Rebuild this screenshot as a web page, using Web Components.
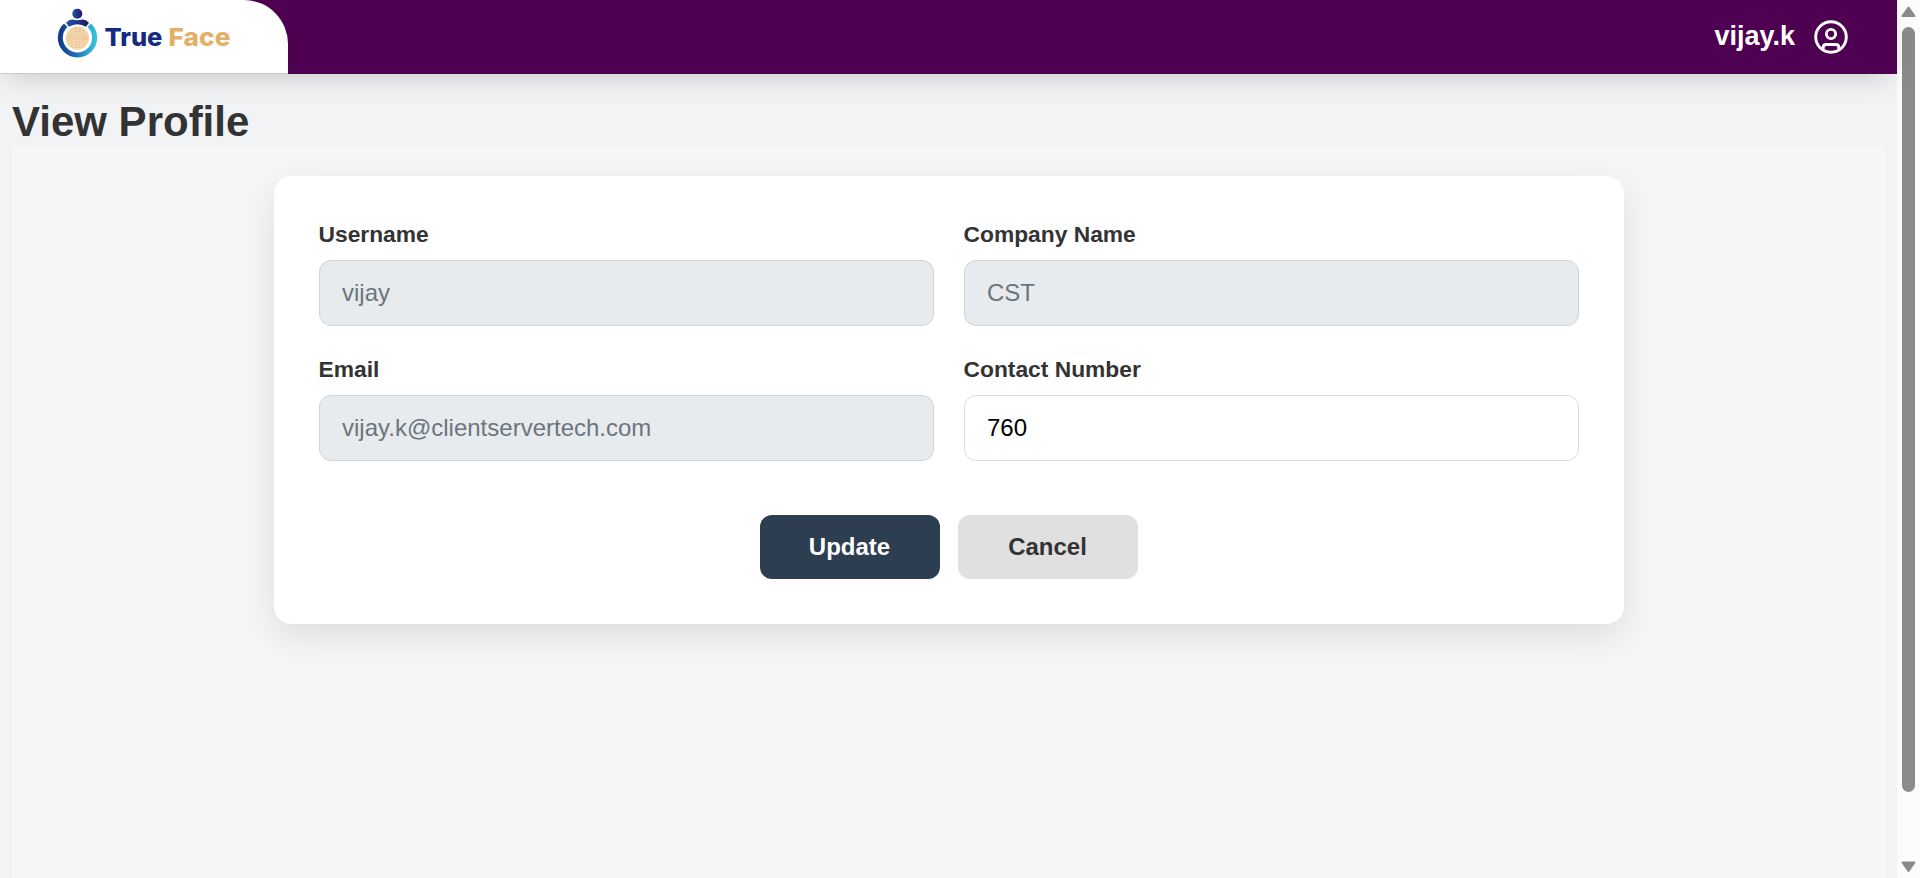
<!DOCTYPE html>
<html lang="en">
<head>
<meta charset="utf-8">
<title>View Profile</title>
<style>
html,body{margin:0;height:100%;overflow:hidden}
body{font-family:"Liberation Sans",Arial,sans-serif;color:#333;background:#f1f3f5}
</style>
</head>
<body>
<profile-app>
  <app-header user="vijay.k"></app-header>
  <profile-page heading="View Profile">
    <form-field label="Username" value="vijay" disabled></form-field>
    <form-field label="Company Name" value="CST" disabled></form-field>
    <form-field label="Email" value="vijay.k@clientservertech.com" disabled></form-field>
    <form-field label="Contact Number" value="760"></form-field>
    <action-button slot="actions" primary>Update</action-button>
    <action-button slot="actions">Cancel</action-button>
  </profile-page>
  <scroll-rail slot="rail"></scroll-rail>
</profile-app>
<script>
const define = (name, render) => customElements.define(name, class extends HTMLElement {
  constructor() {
    super();
    this.attachShadow({mode: 'open'}).innerHTML = render(this);
  }
});

define('profile-app', () => `
<style>
:host{display:flex;height:100vh;overflow:hidden}
main{flex:1;min-width:0;display:flex;flex-direction:column}
</style>
<main><slot></slot></main><slot name="rail"></slot>`);

define('brand-logo', () => `
<style>:host{display:block;width:180px;height:60px}svg{display:block}text{font:800 25px Inter,sans-serif}</style>
<svg width="180" height="60" viewBox="53 0 180 60">
  <defs>
    <linearGradient id="ring" x1="0" x2="1"><stop offset="0" stop-color="#123b8e"/><stop offset=".5" stop-color="#1f78b8"/><stop offset="1" stop-color="#35bfdc"/></linearGradient>
    <linearGradient id="navy" x1="0" x2="1"><stop offset="0" stop-color="#2457a5"/><stop offset="1" stop-color="#1c1769"/></linearGradient>
  </defs>
  <path d="M65.700 25.200A17.200 17.200 0 1 0 89.300 25.200" fill="none" stroke="url(#ring)" stroke-width="5"/>
  <path d="M66 22.700Q69 19.300 72.500 19.500Q77.300 21 82 19.500Q86 19.300 89 22.700L86 26.800Q77.300 21.800 69 26.800Z" fill="url(#navy)"/>
  <circle cx="77.300" cy="13.800" r="5" fill="url(#navy)"/>
  <circle cx="77.400" cy="38" r="11.700" fill="#f4d9b4"/>
  <g fill="none" stroke="#e8b878" stroke-width="1" stroke-dasharray="2.500 1.300"><circle cx="77.400" cy="38" r="2"/><circle cx="77.400" cy="38" r="4.500"/><circle cx="77.400" cy="38" r="7"/><circle cx="77.400" cy="38" r="9.500"/></g>
  <text x="104.400" y="45.500" fill="#142b81" textLength="58" lengthAdjust="spacingAndGlyphs">True</text>
  <text x="168.600" y="45.500" fill="#e3b067" textLength="61.800" lengthAdjust="spacingAndGlyphs">Face</text>
</svg>`);

define('app-header', el => `
<style>
:host{display:flex;justify-content:space-between;height:74px;flex:none;background:#4e0051;position:relative;box-shadow:0 12px 28px -9px rgba(0,0,0,.18)}
.brand{box-sizing:border-box;width:288px;height:74px;padding-left:53px;background:#fff;border-bottom:1px solid #c8c8c8;border-top-right-radius:44px}
.user{display:flex;align-items:center;gap:17px;padding-right:48px;color:#fff;font-size:27px;font-weight:700;line-height:31px}
.user span{padding-bottom:2px;margin-right:1px}
svg{display:block}
</style>
<div class="brand"><brand-logo></brand-logo></div>
<div class="user"><span>${el.getAttribute('user')}</span>
<svg width="36" height="36" viewBox="0 0 36 36" fill="none" stroke="#fff" stroke-width="2.900"><circle cx="18" cy="18" r="15.300"/><circle cx="18" cy="15" r="4.600"/><path d="M10.200 30V28.500Q10.200 25.500 13.200 25.500H22.800Q25.800 25.500 25.800 28.500V30"/></svg></div>`);

define('profile-page', el => `
<style>
:host{display:flex;flex-direction:column;flex:1;min-height:0;padding:0 12px}
h1{margin:24px 0 0;height:48px;font-size:42px;line-height:48px;font-weight:700}
.panel{flex:1;background:#f4f7f6;padding-top:30px}
.card{box-sizing:border-box;width:1350px;height:448px;margin:0 auto;padding:45px;border-radius:18px;background:#fff;box-shadow:0 12px 36px rgba(0,0,0,.1)}
.fields{display:grid;grid-template-columns:1fr 1fr;gap:30px}
.actions{display:flex;justify-content:center;gap:18px;margin-top:54px}
</style>
<h1>${el.getAttribute('heading')}</h1>
<section class="panel"><div class="card">
<div class="fields"><slot></slot></div>
<div class="actions"><slot name="actions"></slot></div>
</div></section>`);

define('form-field', el => `
<style>
:host{display:block}
label{display:block;height:26px;line-height:27px;font-size:22.800px;font-weight:700;margin-bottom:13px}
input{display:block;box-sizing:border-box;width:100%;height:66px;margin:0;padding:0 22.500px;border:1px solid #ddd;border-radius:12px;background:#fff;color:#000;font:24px "Liberation Sans",Arial,sans-serif}
input:disabled{background:#e8ebee;border-color:#ced4da;color:#6c757d}
</style>
<label for="f">${el.getAttribute('label')}</label>
<input id="f" value="${el.getAttribute('value')}" ${el.hasAttribute('disabled') ? 'disabled' : ''}>`);

define('action-button', () => `
<style>
:host{display:block}
button{display:block;width:180px;height:64px;padding:0;border:0;border-radius:12px;background:#e0e0e0;color:#333;font:700 24px "Liberation Sans",Arial,sans-serif}
:host([primary]) button{background:#2c3e50;color:#fff}
</style>
<button><slot></slot></button>`);

define('scroll-rail', () => `
<style>
:host{box-sizing:border-box;display:flex;flex-direction:column;align-items:center;flex:none;width:23px;height:100%;background:#fcfcfc;padding:6px 0 5px}
svg{display:block;flex:none}
.thumb{width:13px;height:765px;margin-top:10px;border-radius:7px;background:#8b8b8b}
.gap{flex:1}
</style>
<svg width="15" height="11" viewBox="0 0 15 11"><path d="M7.500 1.500L13.500 10H1.500Z" fill="#8b8b8b" stroke="#8b8b8b" stroke-width="2" stroke-linejoin="round"/></svg>
<div class="thumb"></div><div class="gap"></div>
<svg width="15" height="12" viewBox="0 0 15 12"><path d="M7.500 10L13.500 1.500H1.500Z" fill="#8b8b8b" stroke="#8b8b8b" stroke-width="2" stroke-linejoin="round"/></svg>`);
</script>
</body>
</html>
